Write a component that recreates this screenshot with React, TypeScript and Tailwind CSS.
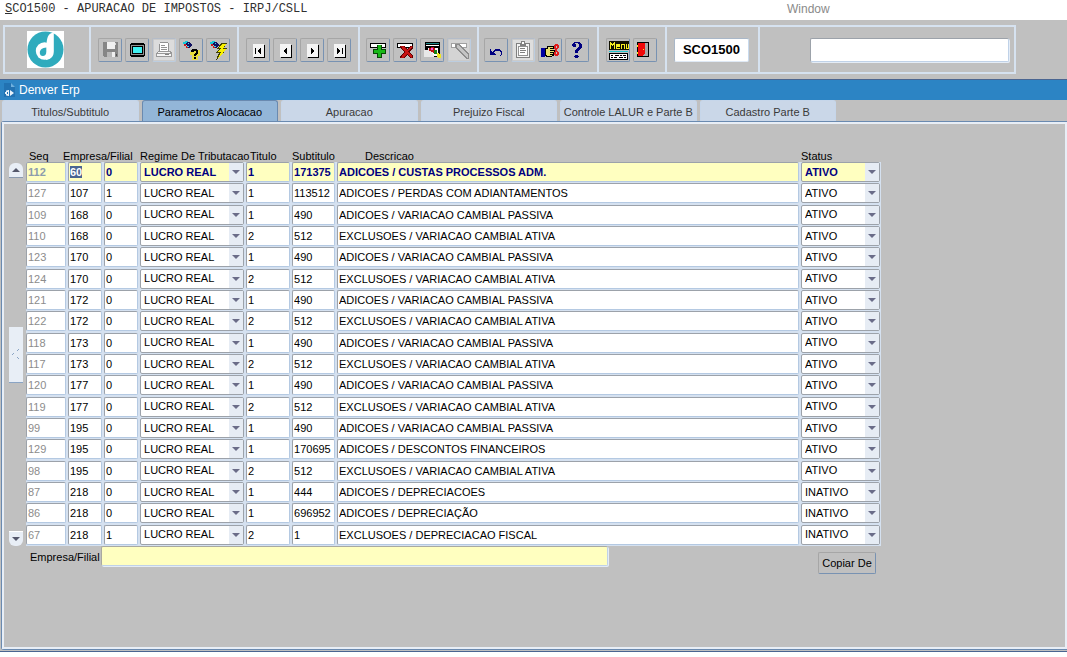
import { useEffect, useRef } from 'react';
import type { ReactNode } from 'react';

type Row = [string, string, string, string, string, string, string];

const rows: Row[] = [
  ['112', '60', '0', '1', '171375', 'ADICOES / CUSTAS PROCESSOS ADM.', 'ATIVO'],
  ['127', '107', '1', '1', '113512', 'ADICOES / PERDAS COM ADIANTAMENTOS', 'ATIVO'],
  ['109', '168', '0', '1', '490', 'ADICOES / VARIACAO CAMBIAL PASSIVA', 'ATIVO'],
  ['110', '168', '0', '2', '512', 'EXCLUSOES / VARIACAO CAMBIAL ATIVA', 'ATIVO'],
  ['123', '170', '0', '1', '490', 'ADICOES / VARIACAO CAMBIAL PASSIVA', 'ATIVO'],
  ['124', '170', '0', '2', '512', 'EXCLUSOES / VARIACAO CAMBIAL ATIVA', 'ATIVO'],
  ['121', '172', '0', '1', '490', 'ADICOES / VARIACAO CAMBIAL PASSIVA', 'ATIVO'],
  ['122', '172', '0', '2', '512', 'EXCLUSOES / VARIACAO CAMBIAL ATIVA', 'ATIVO'],
  ['118', '173', '0', '1', '490', 'ADICOES / VARIACAO CAMBIAL PASSIVA', 'ATIVO'],
  ['117', '173', '0', '2', '512', 'EXCLUSOES / VARIACAO CAMBIAL ATIVA', 'ATIVO'],
  ['120', '177', '0', '1', '490', 'ADICOES / VARIACAO CAMBIAL PASSIVA', 'ATIVO'],
  ['119', '177', '0', '2', '512', 'EXCLUSOES / VARIACAO CAMBIAL ATIVA', 'ATIVO'],
  ['99', '195', '0', '1', '490', 'ADICOES / VARIACAO CAMBIAL PASSIVA', 'ATIVO'],
  ['129', '195', '0', '1', '170695', 'ADICOES / DESCONTOS FINANCEIROS', 'ATIVO'],
  ['98', '195', '0', '2', '512', 'EXCLUSOES / VARIACAO CAMBIAL ATIVA', 'ATIVO'],
  ['87', '218', '0', '1', '444', 'ADICOES / DEPRECIACOES', 'INATIVO'],
  ['86', '218', '0', '1', '696952', 'ADICOES / DEPRECIAÇÃO', 'INATIVO'],
  ['67', '218', '1', '2', '1', 'EXCLUSOES / DEPRECIACAO FISCAL', 'INATIVO'],
];

const tabs = [
  'Titulos/Subtitulo',
  'Parametros Alocacao',
  'Apuracao',
  'Prejuizo Fiscal',
  'Controle LALUR e Parte B',
  'Cadastro Parte B',
];

function ToolButton({ label, dim, children }: { label: string; dim?: boolean; children: ReactNode }) {
  return (
    <button
      type="button"
      aria-label={label}
      className={`size-6 shrink-0 rounded-[2px] border ${
        dim
          ? 'border-[#b4bcc8] border-r-[#bccde0] border-b-[#bccde0] bg-[#cbcbcb]'
          : 'border-[#a6a6a6] border-r-[#7892b2] border-b-[#7892b2] bg-[#c0c0c0]'
      }`}
    >
      <svg viewBox="1 1 22 22" className="block size-[22px]" shapeRendering="crispEdges" aria-hidden="true">
        {children}
      </svg>
    </button>
  );
}

function Section({ className, children }: { className: string; children: ReactNode }) {
  return (
    <div className={`flex items-center border-r-2 border-r-[#d6e2f0] ${className}`}>{children}</div>
  );
}

function Page({ children }: { children: ReactNode }) {
  return (
    <>
      <path d="M8 20h11V7h-1v12H8z" fill="#000" />
      <path d="M7 6h11v13H7z" fill="#f4f4f4" />
      {children}
    </>
  );
}

function Pen() {
  return (
    <>
      <path d="M4 4l4-1 2 2-5 3z" fill="#18c8d8" />
      <path d="M5 6h2v2h2v2H7V8H5z" fill="#d01818" />
      <path d="M8 4h3v1h1v1h1v2h-1v1h-1v1H9V9H8V7H7V5h1z" fill="#101060" />
      <path d="M9 5h1v1H9zM8 8h2v1H8z" fill="#40d0f0" />
    </>
  );
}

function TextCell({
  label,
  value,
  active,
  tone,
  current,
}: {
  label: string;
  value: string;
  active: boolean;
  tone?: string;
  current?: boolean;
}) {
  const ref = useRef<HTMLInputElement>(null);
  useEffect(() => {
    if (current) {
      ref.current?.focus();
      ref.current?.select();
    }
  }, [current]);
  return (
    <input
      ref={ref}
      aria-label={label}
      defaultValue={value}
      className={`block h-5 w-full rounded-[2px] border border-[#9ca2aa] border-r-[#b4c9e2] border-b-[#b4c9e2] px-px outline-none selection:bg-[#4a6591] selection:text-white ${
        active ? 'bg-[#ffffc0] font-bold' : 'bg-white'
      } ${tone ?? (active ? 'text-[#000080]' : 'text-black')}`}
    />
  );
}

function SelectCell({ label, value, options, active }: { label: string; value: string; options: string[]; active: boolean }) {
  return (
    <div className="relative">
      <select
        aria-label={label}
        defaultValue={value}
        className={`block h-5 w-full appearance-none rounded-[2px] border border-[#9ca2aa] pl-[3px] outline-none ${
          active ? 'bg-[#ffffc0] font-bold text-[#000080]' : 'bg-white text-black'
        }`}
      >
        {options.map((o) => (
          <option key={o}>{o}</option>
        ))}
      </select>
      <span className="pointer-events-none absolute inset-y-px right-px flex w-3.5 items-center justify-center bg-[#e6ecf4]">
        <svg viewBox="0 0 8 4" className="h-1 w-2" aria-hidden="true">
          <path d="M0 0h8L4 4z" fill="#6a6c88" />
        </svg>
      </span>
    </div>
  );
}

export default function App() {
  return (
    <div className="flex min-h-screen flex-col bg-white pb-[5px] font-['Liberation_Sans',Arial,sans-serif] text-[11px] text-black">
      <header className="flex h-5 shrink-0 items-start text-[12px] leading-[18px]">
        <h1 className="w-[782px] pl-[5px] font-['Liberation_Mono','Courier_New',monospace] text-[#303030]">
          <span className="underline">S</span>CO1500 - APURACAO DE IMPOSTOS - IRPJ/CSLL
        </h1>
        <button type="button" className="px-[5px] text-[#8a8a8a]">
          Window
        </button>
      </header>

      <div className="flex flex-1 flex-col border-b border-[#4a6591] bg-[#c0c0c0]">
        <div className="px-[3px] pt-[5px] pb-[5px]">
          <div className="flex h-[49px] max-w-[1013px] border-2 border-r-0 border-[#d6e2f0]">
            <Section className="w-[86px] pl-[22px]">
              <svg viewBox="0 0 37 37" className="size-[37px]" role="img" aria-label="Denver">
                <path d="M0 0h37v37H0z" fill="#fff" />
                <circle cx="18.5" cy="18.5" r="18" fill="#2fabbd" />
                <circle cx="17.5" cy="20" r="8.7" fill="#fff" />
                <path d="M19.5 13C20 8 20.5 2 26.8 1.5V20c0 5-2 8-8 9z" fill="#fff" />
                <path d="M19.3 16.5v4.2c0 3-1.5 4.3-3.5 4.3-1.800 0-3-1.300-3-3.300 0-3 2.500-5 6.500-5.200z" fill="#2fabbd" />
              </svg>
            </Section>

            <Section className="w-[148px] gap-[3px] pl-[7px]">
              <ToolButton label="Salvar">
                <path d="M5 4h15v15H6v-1H5z" fill="#868686" />
                <path d="M9 4h8v7H9z" fill="#f0f0f0" />
                <path d="M17 5h1v2h-1z" fill="#d8d8d8" />
                <path d="M9 14h8v5H9z" fill="#b8b8b8" />
                <path d="M14 14h3v5h-3z" fill="#f0f0f0" />
                <path d="M18 16h1v2h-1z" fill="#555" />
              </ToolButton>
              <ToolButton label="Tela">
                <path d="M6 5h13v1h1v12h-1v1H6v-1H5V6h1z" fill="#000" />
                <path d="M6 7h13v10H6z" fill="#909090" />
                <path d="M7 8h11v8H7z" fill="#000" />
                <path d="M8 9h9v6H8z" fill="#40f0f0" />
              </ToolButton>
              <ToolButton label="Imprimir" dim>
                <path d="M2 2h20v20H2z" fill="#dcdcdc" />
                <path d="M8 4h8v9H8z" fill="#fff" />
                <path d="M8 4h8v1H8zM9 7h4v1H9zM9 9h6v1H9zM9 11h6v1H9zM7 6h1v7H7zM16 5h1v8h-1z" fill="#929292" />
                <path d="M6 13h13l1 2v4H4v-4z" fill="#989898" />
                <path d="M6 14h12v1H6zM5 16h14v2H5z" fill="#f4f4f4" />
                <path d="M13 16h4v1h-4z" fill="#808080" />
              </ToolButton>
              <ToolButton label="Entrar consulta">
                <Pen />
                <path d="M11 12h10v10H11z" fill="#e9df3c" />
                <path d="M11 12h2v2h-2zM11 17h2v5h-2zM19 18h2v4h-2z" fill="#c0c0c0" />
                <path d="M13 11h5v1h1v4h-1v1h-1v1h-2v-2h1v-1h1v-2h-2v1h-3v-2h1zM15 19h2v2h-2z" fill="#000" />
              </ToolButton>
              <ToolButton label="Executar consulta">
                <Pen />
                <path d="M15 5h6l-3 5h3l-4 4h2l-9 8 3-7h-3l3-4h-2z" fill="#404000" />
                <path d="M16 6h4l-3 5h3l-4 4h2l-6 5 3-6h-3l3-4h-2z" fill="#f8f000" />
              </ToolButton>
            </Section>

            <Section className="w-[121px] gap-[3px] pl-[7px]">
              <ToolButton label="Primeiro registro">
                <Page>
                  <path d="M9 10h1v6H9zM15 10v6h-1v-1h-1v-1h-1v-2h1v-1h1v-1z" fill="#000" />
                </Page>
              </ToolButton>
              <ToolButton label="Registro anterior">
                <Page>
                  <path d="M14 10v6h-1v-1h-1v-1h-1v-2h1v-1h1v-1z" fill="#000" />
                </Page>
              </ToolButton>
              <ToolButton label="Proximo registro">
                <Page>
                  <path d="M11 10v6h1v-1h1v-1h1v-2h-1v-1h-1v-1z" fill="#000" />
                </Page>
              </ToolButton>
              <ToolButton label="Ultimo registro">
                <Page>
                  <path d="M10 10v6h1v-1h1v-1h1v-2h-1v-1h-1v-1zM15 10h1v6h-1z" fill="#000" />
                </Page>
              </ToolButton>
            </Section>

            <Section className="w-[119px] gap-[3px] pl-[6px]">
              <ToolButton label="Inserir registro">
                <path d="M4 5h16v5H4z" fill="#000" />
                <path d="M5 6h14v3H5z" fill="#fff" />
                <path d="M11 7h5v4h4v5h-4v4h-5v-4H7v-5h4z" fill="#064806" />
                <path d="M12 7h3v5h4v3h-4v4h-3v-4H8v-3h4z" fill="#18b818" />
              </ToolButton>
              <ToolButton label="Excluir registro">
                <path d="M4 5h16v5H4z" fill="#000" />
                <path d="M5 6h14v3H5z" fill="#fff" />
                <path d="M7 8h4l3 3 3-3h3v2l-4 4 4 4v2h-3l-3-3-3 3H7v-2l4-4-4-4z" fill="#600000" />
                <path d="M8 8h2l4 4 4-4h1v1l-5 5 5 5v1h-1l-4-4-4 4H8v-1l5-5-5-5z" fill="#b80c0c" />
                <path d="M9 9h2l8 9v1h-2L9 10zM17 9h2l-8 10H9v-1z" fill="#c81414" />
              </ToolButton>
              <ToolButton label="Limpar tela">
                <path d="M5 4h15v15H5z" fill="#000" />
                <path d="M6 5h13v1H6z" fill="#208888" />
                <path d="M6 7h13v1H6z" fill="#fff" />
                <path d="M8 10h10v8H8z" fill="#fff" />
                <path d="M4 12h3l2-2 4 5 1 4H4z" fill="#e8e8e8" />
                <path d="M9 10h2V9h3v1h1v3h1v2h-3v-1h-2v-1H9z" fill="#c01010" />
                <path d="M11 10h2v2h-2z" fill="#f050f0" />
                <path d="M14 12h3v4h-3z" fill="#188018" />
                <path d="M17 15h2v1h2v4h-3v-1h-1z" fill="#f0e820" />
              </ToolButton>
              <ToolButton label="Limpar registro" dim>
                <path d="M2 2h20v20H2z" fill="#d4d4d4" />
                <path d="M4 5h16v5H4z" fill="#a0a0a0" />
                <path d="M5 6h14v3H5z" fill="#fff" />
                <path d="M8 6h5l9 10v5h-3L8 10z" fill="#8c8c8c" />
                <path d="M10 7h2l9 10v3h-1L10 9z" fill="#c4c4c4" />
              </ToolButton>
            </Section>

            <Section className="w-[120px] gap-[3px] pl-[5px]">
              <ToolButton label="Desfazer">
                <path d="M6 11v6h6v-1h-1v-1h-1v-1h1v-1h5v1h1v3h-1v1h1v-1h1v-4h-1v-1h-1v-1h-5v1h-1v1H9v1H8v-1H7v-1z" fill="#000080" />
              </ToolButton>
              <ToolButton label="Colar" dim>
                <path d="M2 2h20v20H2z" fill="#dedede" />
                <path d="M5 5h14v15H5z" fill="#808080" />
                <path d="M6 6h12v13H6z" fill="#f4f4f4" />
                <path d="M7 8h10v10H7z" fill="#929292" />
                <path d="M8 9h8v8H8z" fill="#fff" />
                <path d="M9 10h5v1H9zM9 12h6v1H9zM9 14h5v1H9zM9 5h1V3h4v2h1v3H9z" fill="#808080" />
                <path d="M11 4h2v2h-2z" fill="#fff" />
              </ToolButton>
              <ToolButton label="Recortar">
                <path d="M3 10h4v9H3z" fill="#0000a0" />
                <path d="M7 10h2V8h8v3h-2v1h2v3h-1v3h-2v1H8v-1H7z" fill="#000" />
                <path d="M8 11h2V9h5v1h-3v1h3v1h-3v1h4v1h-4v1h3v1h-3v1h2v1H9v-1H8z" fill="#eae070" />
                <path d="M17 6h3v1h1v3h-1v1h-1v2h1v1h1v3h-1v1h-3v-1h-1v-3h1v-3h-1V7h1zM18 8v2h1V8zM18 14v2h1v-2z" fill="#e01c1c" fillRule="evenodd" />
              </ToolButton>
              <ToolButton label="Ajuda">
                <path d="M9 4h6v1h1v1h1v4h-1v1h-1v1h-1v1h-1v2h-3v-3h1v-1h1v-1h1V9h1V6h-1V5h-3v1h1v3H8V8H7V6h1V5h1zM10 17h3v1h1v1h-1v1h-3v-1H9v-1h1z" fill="#000080" />
              </ToolButton>
            </Section>

            <Section className="w-[68px] gap-[3px] pl-[7px]">
              <ToolButton label="Menu">
                <path d="M3 3h20v9H3z" fill="#101000" />
                <path d="M4 4h1v1h1v1h1V5h1V4h1v7H8V7H7v1H6V7H5v4H4zM10 6h4v3h-3v1h3v1h-4zM15 6h4v5h-1V7h-2v4h-1zM20 6h1v4h1V6h1v5h-3z" fill="#f4ee20" />
                <path d="M3 13h19v1H3z" fill="#20c8d0" />
                <path d="M3 15h19v7H3z" fill="#000" />
                <path d="M4 16h17v5H4z" fill="#fff" />
                <path d="M5 17h2v1H5zM9 17h4v1H9zM14 17h2v1h-2zM17 17h3v1h-3zM5 19h2v1H5zM8 19h3v1H8zM13 19h4v1h-4zM18 19h2v1h-2z" fill="#000" />
              </ToolButton>
              <ToolButton label="Sair">
                <path d="M4 4h12v15H4z" fill="#000" />
                <path d="M5 5h10v13H5z" fill="#a8a8a8" />
                <path d="M5 5h7v11h-1v1h-1v1H5z" fill="#f00808" />
                <path d="M4 7h1v2H4zM4 14h1v2H4zM10 11h1v1h-1z" fill="#f4e820" />
              </ToolButton>
            </Section>

            <Section className="w-[93px] pl-[7px]">
              <input
                aria-label="Programa"
                defaultValue="SCO1500"
                className="h-6 w-[75px] rounded-[2px] border border-[#a9b7c8] border-r-[#c8daee] border-b-[#dfe9f5] bg-white text-center text-[13px] font-bold outline-none"
              />
            </Section>

            <Section className="flex-1 justify-end pr-[5px]">
              <input
                aria-label="Mensagem"
                className="h-6 w-[199px] rounded-[2px] border border-[#9ca2aa] border-r-[#c0d2e8] border-b-[#c0d2e8] bg-white px-1 shadow-[1px_1px_0_#e4ecf6] outline-none"
              />
            </Section>
          </div>
        </div>

        <div className="flex h-[21px] items-center gap-1 border-t border-[#4a6591] bg-[#2c84c4] pl-1 text-[12px] text-white">
          <svg viewBox="0 0 11 14" className="h-3.5 w-[11px]" aria-hidden="true">
            <path d="M0 0h7l4 4v10H0z" fill="#2272b2" />
            <path d="M7 0l4 4H7z" fill="#6fb0de" />
            <path d="M2 7.500h1.500V7H5v6H3.500v-.5H2V11H1V9h1zM3 9v2h1V9zM6 7l4 3-4 3z" fill="#e8f2fa" fillRule="evenodd" />
          </svg>
          <h2>Denver Erp</h2>
        </div>

        <div role="tablist" className="ml-0.5 grid h-[21px] max-w-[834px] grid-cols-6 gap-[3px]">
          {tabs.map((t, i) => (
            <button
              key={t}
              type="button"
              role="tab"
              aria-selected={i === 1}
              className={`rounded-t-[3px] border-t border-r border-l pt-0.5 whitespace-nowrap ${
                i === 1
                  ? 'border-[#6a8ab0] bg-[#93b6d8] text-black'
                  : 'border-[#c6d6ea] bg-[#cad7e8] text-[#3a3a3a]'
              }`}
            >
              {t}
            </button>
          ))}
        </div>

        <main className="mb-px ml-px flex flex-1 flex-col rounded-l-[3px] border border-r-0 border-[#6a8ab0]">
          <div className="flex-1 border-2 border-[#e8eef6] pt-[26px] pr-4 pl-[5px]">
            <div className="flex max-w-[872px] gap-[3px]">
              <div className="flex w-3.5 flex-col justify-between pt-[13px]">
                <button
                  type="button"
                  aria-label="Rolar para cima"
                  className="flex h-[15px] items-center justify-center rounded-t-[6px] border-b border-[#8a9ab0] bg-[#e8eef6]"
                >
                  <svg viewBox="0 0 8 4" className="h-1 w-2" aria-hidden="true">
                    <path d="M0 4h8L4 0z" fill="#55586c" />
                  </svg>
                </button>
                <button
                  type="button"
                  aria-label="Barra de rolagem"
                  className="flex h-14 items-center justify-center border-b border-[#8aa4c4] bg-[#e8eef6]"
                >
                  <svg viewBox="0 0 10 12" className="h-3 w-2.5" shapeRendering="crispEdges" aria-hidden="true">
                    <path d="M6 2h1V1h1v1H7v1H6zM1 6h1V5h1v1H2v1H1zM6 9h1v1h1v1H7v-1H6z" fill="#8aa4c4" />
                  </svg>
                </button>
                <button
                  type="button"
                  aria-label="Rolar para baixo"
                  className="flex h-[15px] items-center justify-center rounded-b-[6px] border-t border-white bg-[#e8eef6]"
                >
                  <svg viewBox="0 0 8 4" className="h-1 w-2" aria-hidden="true">
                    <path d="M0 0h8L4 4z" fill="#55586c" />
                  </svg>
                </button>
              </div>

              <div className="min-w-0 flex-1">
                <table className="h-[396px] w-full table-fixed border-collapse">
                  <colgroup>
                    <col className="w-[37px]" />
                    <col className="w-[5px]" />
                    <col className="w-[36px]" />
                    <col className="w-[36px]" />
                    <col className="w-[106px]" />
                    <col className="w-[46px]" />
                    <col className="w-[45px]" />
                    <col />
                    <col className="w-[80px]" />
                  </colgroup>
                  <thead>
                    <tr className="h-3 text-left leading-[12px] whitespace-nowrap [&>th]:p-0 [&>th]:font-normal">
                      <th>
                        <span className="pl-[3px]">Seq</span>
                      </th>
                      <th colSpan={3}>Empresa/Filial</th>
                      <th>Regime De Tributacao</th>
                      <th>
                        <span className="pl-1">Titulo</span>
                      </th>
                      <th>Subtitulo</th>
                      <th>
                        <span className="pl-7">Descricao</span>
                      </th>
                      <th>Status</th>
                    </tr>
                  </thead>
                  <tbody className="bg-[#d5e1f0]">
                    {rows.map(([seq, emp, fil, tit, sub, desc, status], i) => {
                      const a = i === 0;
                      return (
                        <tr key={seq} className="[&>td]:p-0 [&>td]:pr-0.5 [&>td]:align-top [&>td:last-child]:pr-px">
                          <td colSpan={2}>
                            <TextCell label="Seq" value={seq} active={a} tone={a ? 'text-[#8c9cac]' : 'text-[#8c8c8c]'} />
                          </td>
                          <td>
                            <TextCell label="Empresa" value={emp} active={a} current={a} />
                          </td>
                          <td>
                            <TextCell label="Filial" value={fil} active={a} />
                          </td>
                          <td>
                            <SelectCell label="Regime De Tributacao" value="LUCRO REAL" options={['LUCRO REAL']} active={a} />
                          </td>
                          <td>
                            <TextCell label="Titulo" value={tit} active={a} />
                          </td>
                          <td>
                            <TextCell label="Subtitulo" value={sub} active={a} />
                          </td>
                          <td>
                            <TextCell label="Descricao" value={desc} active={a} />
                          </td>
                          <td>
                            <SelectCell label="Status" value={status} options={['ATIVO', 'INATIVO']} active={a} />
                          </td>
                        </tr>
                      );
                    })}
                  </tbody>
                </table>
              </div>
            </div>

            <div className="flex max-w-[867px] items-start pl-[21px]">
              <label htmlFor="empresa-filial" className="w-[71px] shrink-0 leading-[22px]">
                Empresa/Filial
              </label>
              <input
                id="empresa-filial"
                className="h-5 w-[507px] rounded-[2px] border border-[#a9a9a0] border-r-[#c0d2e8] border-b-[#c0d2e8] bg-[#ffffc0] px-px shadow-[1px_1px_0_#e4ecf6] outline-none"
              />
              <button
                type="button"
                className="mt-1.5 ml-auto h-[22px] w-[58px] rounded-[2px] border border-[#a6a6a6] border-r-[#7892b2] border-b-[#7892b2] whitespace-nowrap"
              >
                Copiar De
              </button>
            </div>
          </div>
        </main>
      </div>
    </div>
  );
}
